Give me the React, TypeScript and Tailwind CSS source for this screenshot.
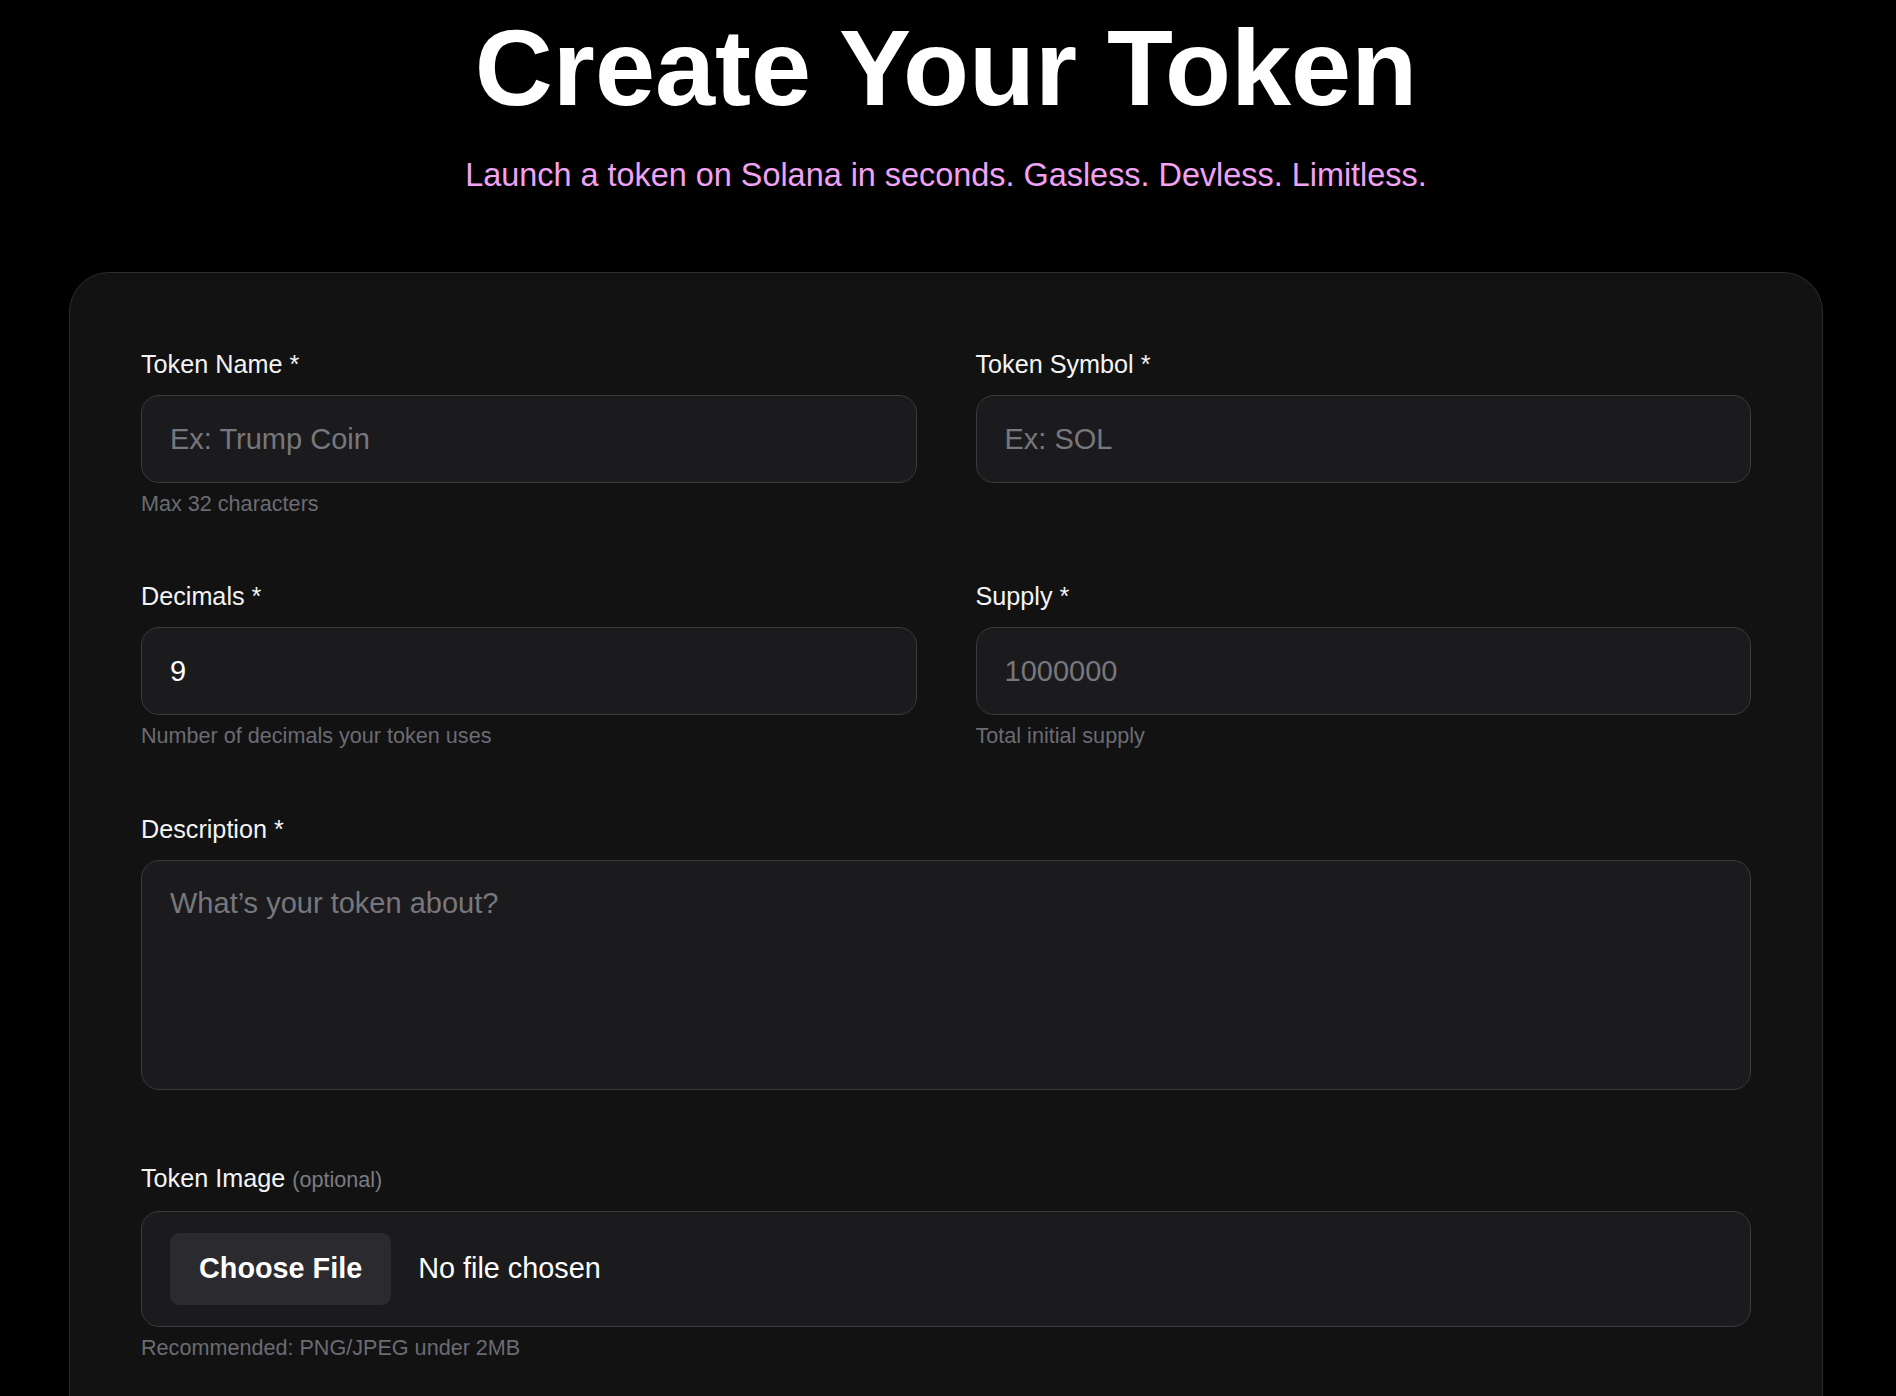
import { useState } from "react"

type CampoProps = {
  label: string
  placeholder?: string
  value?: string
  help?: string
}

// clases comunes de los inputs
const inputCls =
  "w-full h-[88px] rounded-[18px] border border-[#3a3a3f] bg-[#1b1b1e] px-[28px] text-[29px] text-white placeholder:text-[#77777d] outline-none"

const labelCls = "mb-[13px] text-[25.2px] leading-[36px] text-[#f4f4f5]"
const helpCls = "mt-[6px] text-[21.6px] leading-[30px] text-[#6b6b73]"

const Campo = ({ label, placeholder, value, help }: CampoProps) => {
  const [valor, setValor] = useState(value ?? "")

  return (
    <div className="flex flex-col">
      <label className={labelCls}>{label}</label>
      <input
        type="text"
        className={inputCls}
        placeholder={placeholder}
        value={valor}
        onChange={(e) => setValor(e.target.value)}
      />
      {help && <p className={helpCls}>{help}</p>}
    </div>
  )
}

const App = () => {
  const [descripcion, setDescripcion] = useState("")

  return (
    <div className="min-h-screen bg-black pl-[69px] pr-[73px] pt-[14px] font-['Liberation_Sans',Arial,sans-serif]">
      <h1 className="text-center text-[108px] font-bold leading-none text-white">Create Your Token</h1>
      <p className="mt-[29px] text-center text-[32.4px] leading-[48px] text-[#f2a2f4]">
        Launch a token on Solana in seconds. Gasless. Devless. Limitless.
      </p>

      <div className="mt-[73px] rounded-[40px] border border-[#2c2c2f] bg-[#121212] px-[71px] pt-[73px] pb-[72px]">
        {/* nombre, símbolo, decimales y supply */}
        <div className="grid grid-cols-2 items-start gap-x-[59px] gap-y-[59px]">
          <Campo label="Token Name *" placeholder="Ex: Trump Coin" help="Max 32 characters" />
          <Campo label="Token Symbol *" placeholder="Ex: SOL" />
          <Campo label="Decimals *" value="9" help="Number of decimals your token uses" />
          <Campo label="Supply *" placeholder="1000000" help="Total initial supply" />
        </div>

        {/* descripción */}
        <div className="mt-[60px] flex flex-col">
          <label className={labelCls}>Description *</label>
          <textarea
            className="h-[230px] w-full resize-none rounded-[18px] border border-[#3a3a3f] bg-[#1b1b1e] px-[28px] pt-[21px] text-[29px] leading-normal text-white placeholder:text-[#77777d] outline-none"
            placeholder="What’s your token about?"
            value={descripcion}
            onChange={(e) => setDescripcion(e.target.value)}
          />
        </div>

        {/* imagen del token */}
        <div className="mt-[70px] flex flex-col">
          <label className="mb-[13px] text-[25.2px] leading-[36px] text-[#f4f4f5]">
            Token Image <span className="text-[21.6px] text-[#7b7b82]">(optional)</span>
          </label>
          <div className="flex items-center gap-[27px] rounded-[18px] border border-[#3a3a3f] bg-[#1b1b1e] px-[28px] py-[21px]">
            <button className="h-[72px] cursor-pointer rounded-[9px] bg-[#2b2b2f] px-[29px] text-[28.8px] font-bold text-white">
              Choose File
            </button>
            <span className="text-[28.8px] text-white">No file chosen</span>
          </div>
          <p className={helpCls}>Recommended: PNG/JPEG under 2MB</p>
        </div>
      </div>
    </div>
  )
}

export default App
